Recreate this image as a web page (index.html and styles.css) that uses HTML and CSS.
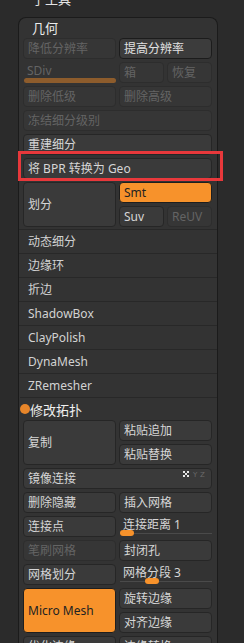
FILE: index.html
```html
<!DOCTYPE html>
<html lang="zh">
  <head>
    <meta charset="UTF-8" />
    <meta name="viewport" content="width=device-width, initial-scale=1.0" />
    <link rel="stylesheet" href="styles.css">
    <title>子工具 - 几何</title>
  </head>
  <body>
    <div class="top-title"><span>子工具</span></div>

    <div class="panel">
      <h2 class="panel-title">几何</h2>

      <div class="grid">
        <div class="btn btn--off span-2">降低分辨率</div>
        <div class="btn btn--strong span-2">提高分辨率</div>

        <div class="slider slider--sdiv span-2">
          <span class="slider-label">SDiv</span>
          <span class="sdiv-bar"></span>
        </div>
        <div class="btn btn--off">箱</div>
        <div class="btn btn--off">恢复</div>

        <div class="btn btn--off span-2">删除低级</div>
        <div class="btn btn--off span-2">删除高级</div>

        <div class="btn btn--off span-4">冻结细分级别</div>
        <div class="btn span-4">重建细分</div>
        <div class="btn span-4 marked">将 BPR 转换为 Geo<span class="mark"></span></div>

        <div class="btn span-2 tall">划分</div>
        <div class="btn btn--orange span-2">Smt</div>
        <div class="btn">Suv</div>
        <div class="btn btn--off">ReUV</div>
      </div>

      <ul class="menu">
        <li class="menu-item">动态细分</li>
        <li class="menu-item">边缘环</li>
        <li class="menu-item">折边</li>
        <li class="menu-item">ShadowBox</li>
        <li class="menu-item">ClayPolish</li>
        <li class="menu-item">DynaMesh</li>
        <li class="menu-item">ZRemesher</li>
      </ul>

      <div class="section-title"><span class="dot"></span>修改拓扑</div>

      <div class="grid">
        <div class="btn span-2 tall">复制</div>
        <div class="btn span-2">粘贴追加</div>
        <div class="btn span-2">粘贴替换</div>

        <div class="btn span-4 mirror">
          镜像连接
          <svg class="axis" width="24" height="7" viewBox="0 0 24 7">
            <rect x="0" y="0" width="2" height="2" fill="#e6e6e6" />
            <rect x="4" y="0" width="2" height="2" fill="#e6e6e6" />
            <rect x="2" y="2" width="2" height="2" fill="#e6e6e6" />
            <rect x="0" y="4" width="2" height="2" fill="#e6e6e6" />
            <rect x="4" y="4" width="2" height="2" fill="#e6e6e6" />
            <text x="10" y="6" font-size="7" fill="#6a6a6a" font-family="DejaVu Sans">Y</text>
            <text x="17" y="6" font-size="7" fill="#6a6a6a" font-family="DejaVu Sans">Z</text>
          </svg>
        </div>

        <div class="btn span-2">删除隐藏</div>
        <div class="btn span-2">插入网格</div>

        <div class="btn span-2">连接点</div>
        <div class="slider span-2">
          <span class="slider-label">连接距离 1</span>
          <span class="track"><span class="knob" style="left: 0px"></span></span>
        </div>

        <div class="btn btn--off span-2">笔刷网格</div>
        <div class="btn span-2">封闭孔</div>

        <div class="btn span-2">网格划分</div>
        <div class="slider span-2">
          <span class="slider-label">网格分段 3</span>
          <span class="track"><span class="knob" style="left: 25px"></span></span>
        </div>

        <div class="btn btn--orange span-2 tall">Micro Mesh</div>
        <div class="btn span-2">旋转边缘</div>
        <div class="btn span-2">对齐边缘</div>

        <div class="btn span-2">优化边缘</div>
        <div class="btn span-2">边缘转换</div>
      </div>
    </div>
  </body>
</html>
```

FILE: styles.css
```css
html,
body {
  margin: 0;
  padding: 0;
}

body {
  height: 643px;
  overflow: hidden;
  background-color: #2b2b2b;
  color: #d6d6d6;
  font-family: "Noto Sans", "Noto Sans CJK SC", sans-serif;
  font-size: 12px;
}

ul {
  margin: 0;
  padding: 0;
  list-style: none;
}

.top-title {
  height: 17px;
  padding-left: 32px;
  overflow: hidden;

  color: #e4e4e4;
  font-size: 13px;
  font-family: "Noto Sans CJK SC", sans-serif;

  & span {
    display: block;
    margin-top: -10px;
    line-height: 17px;
  }
}

.panel {
  width: 198px;
  height: 700px;
  margin-left: 18px;

  background-color: #333333;
  border: 1px solid #1b1b1b;
  border-bottom: none;
  border-radius: 8px 8px 0 0;
}

.panel-title {
  margin: 0;
  padding: 2px 0 0 13px;
  height: 18px;

  color: #ececec;
  font-size: 13px;
  font-weight: normal;
  line-height: 16px;
  font-family: "Noto Sans CJK SC", sans-serif;
}

.grid {
  display: grid;
  grid-template-columns: repeat(4, 45px);
  grid-auto-rows: 21px;
  gap: 3px;
  margin-left: 4px;
}

.span-2 {
  grid-column: span 2;
}

.span-4 {
  grid-column: span 4;
}

.tall {
  grid-row: span 2;
  display: flex;
  align-items: center;
}

.btn {
  position: relative;
  box-sizing: border-box;
  padding-left: 4px;

  background-color: #3a3a3a;
  border: 1px solid #262626;
  border-radius: 4px;

  line-height: 19px;
  white-space: nowrap;
}

.btn--off {
  background-color: #363636;
  border-color: #2d2d2d;
  color: #646464;
}

.btn--strong {
  background-color: #3c3c3c;
  border-color: #1c1c1c;
  color: #e2e2e2;
}

.btn--orange {
  background-color: #f7922b;
  border-color: #1e1e1e;
  color: #222222;
}

.marked .mark {
  position: absolute;
  left: -6px;
  top: -8px;
  width: 199px;
  height: 24px;

  border: 3px solid #e8383b;
}

.mirror .axis {
  position: absolute;
  right: 4px;
  top: 2px;
}

.slider {
  position: relative;
  box-sizing: border-box;
  padding-left: 4px;
  line-height: 18px;
}

.slider--sdiv {
  color: #646464;
}

.sdiv-bar {
  position: absolute;
  left: 1px;
  right: 0;
  bottom: 0;
  height: 5px;

  background-color: #8d5c2c;
  border-radius: 3px;
}

.track {
  position: absolute;
  left: 1px;
  right: 0;
  bottom: 3px;
  height: 1px;

  background-color: #4a4a4a;
}

.knob {
  position: absolute;
  top: -3px;
  width: 14px;
  height: 6px;

  background-color: #f7922b;
  border: 0;
  border-radius: 3px;
}

.menu {
  margin-top: 2px;
}

.menu-item {
  height: 23px;
  padding-left: 9px;

  border-top: 1px solid #282828;
  color: #d2d2d2;
  line-height: 23px;
}

.section-title {
  display: flex;
  align-items: center;
  height: 22px;
  margin-left: 1px;

  border-top: 1px solid #282828;
  color: #f0f0f0;
  font-size: 13px;
  font-family: "Noto Sans CJK SC", sans-serif;
}

.dot {
  width: 10px;
  height: 10px;
  margin-right: 0;

  background-color: #e8862a;
  border-radius: 50%;
}
```
